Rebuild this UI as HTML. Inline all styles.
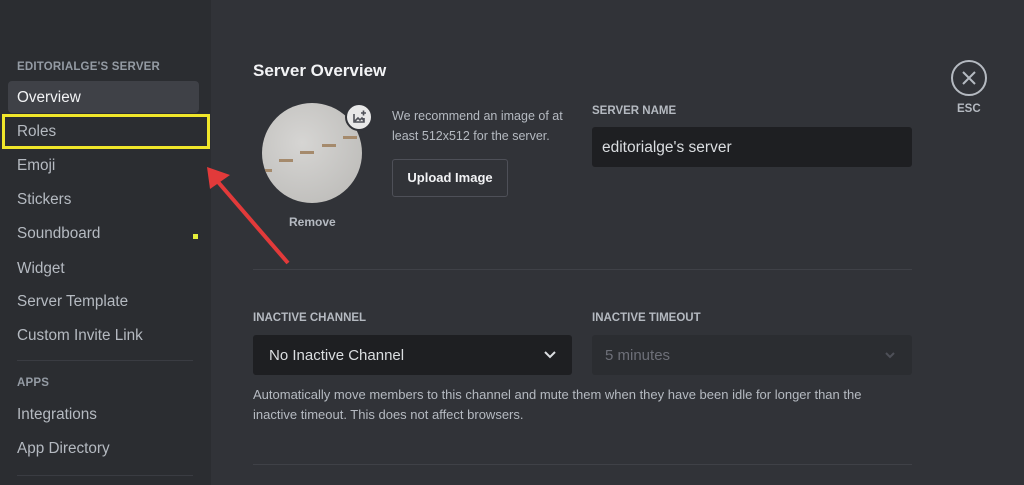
<!DOCTYPE html>
<html><head><style>
*{margin:0;padding:0;box-sizing:border-box}
body{width:1024px;height:485px;overflow:hidden;background:#313338;font-family:"Liberation Sans",sans-serif;position:relative}
.side{position:absolute;left:0;top:0;width:211px;height:485px;background:#2b2d31}
.a{position:absolute}
.hd{font-size:11.5px;font-weight:bold;color:#949ba4;letter-spacing:.2px}
.it{position:absolute;left:17px;font-size:15.3px;color:#b5bac1}
.lbl{font-size:11.5px;font-weight:bold;color:#b5bac1}
</style></head><body>
<div class="side">
<div class="a hd" style="left:17px;top:61px">EDITORIALGE'S SERVER</div>
<div class="a" style="left:8px;top:81px;width:191px;height:32px;background:#3f4147;border-radius:4px"></div>
<div class="it" style="top:89px;color:#f2f3f5">Overview</div>
<div class="a" style="left:2px;top:114px;width:208px;height:35px;border:3px solid #f0e62a"></div>
<div class="it" style="top:123px">Roles</div>
<div class="it" style="top:157px">Emoji</div>
<div class="it" style="top:191px">Stickers</div>
<div class="it" style="top:225px">Soundboard</div>
<div class="a" style="left:193px;top:234px;width:5px;height:5px;background:#e5ee3a"></div>
<div class="it" style="top:260px">Widget</div>
<div class="it" style="top:293px">Server Template</div>
<div class="it" style="top:327px">Custom Invite Link</div>
<div class="a" style="left:17px;top:360px;width:176px;height:1px;background:#3a3c42"></div>
<div class="a hd" style="left:17px;top:377px">APPS</div>
<div class="it" style="top:406px">Integrations</div>
<div class="it" style="top:440px">App Directory</div>
<div class="a" style="left:17px;top:475px;width:176px;height:1px;background:#3a3c42"></div>
</div>

<div class="a" style="left:253px;top:61px;font-size:17px;font-weight:bold;color:#f2f3f5">Server Overview</div>
<div class="a" style="left:262px;top:103px;width:100px;height:100px;border-radius:50%;background:radial-gradient(circle at 40% 40%,#d6d5d3,#b9b8b5);overflow:hidden">
<div class="a" style="left:-2px;top:66px;width:12px;height:3px;background:#a58a6c"></div>
<div class="a" style="left:17px;top:56px;width:14px;height:3px;background:#a58a6c"></div>
<div class="a" style="left:38px;top:48px;width:14px;height:3px;background:#a58a6c"></div>
<div class="a" style="left:60px;top:41px;width:14px;height:3px;background:#a58a6c"></div>
<div class="a" style="left:81px;top:33px;width:14px;height:3px;background:#a58a6c"></div>
</div>
<div class="a" style="left:345px;top:103px;width:28px;height:28px;border-radius:50%;background:#e8e8e8;border:2px solid #313338">
<svg width="24" height="24" viewBox="0 0 24 24" style="position:absolute;left:0;top:0"><path d="M7 9v8h10v-4M14 8h5M16.5 5.5v5M8 16l3-3 2 2 2-2 2 3" stroke="#4e5058" stroke-width="1.6" fill="none"/></svg>
</div>
<div class="a" style="left:289px;top:215px;font-size:12px;font-weight:bold;color:#b5bac1">Remove</div>
<div class="a" style="left:392px;top:106px;font-size:12.5px;line-height:20px;color:#b5bac1">We recommend an image of at<br>least 512x512 for the server.</div>
<div class="a" style="left:392px;top:159px;width:116px;height:38px;border:1px solid #4e5058;border-radius:3px;color:#f2f3f5;font-size:13px;font-weight:bold;text-align:center;line-height:36px">Upload Image</div>
<div class="a lbl" style="left:592px;top:105px">SERVER NAME</div>
<div class="a" style="left:592px;top:127px;width:320px;height:40px;background:#1e1f22;border-radius:3px;color:#dbdee1;font-size:15.5px;padding:12px 10px">editorialge's server</div>
<svg class="a" style="left:950px;top:59px" width="38" height="38"><circle cx="19" cy="19" r="17" stroke="#b5bac1" stroke-width="2" fill="none"/><path d="M13 13l12 12M25 13l-12 12" stroke="#b5bac1" stroke-width="2"/></svg>
<div class="a" style="left:957px;top:103px;font-size:11.5px;font-weight:bold;color:#b5bac1">ESC</div>
<div class="a" style="left:253px;top:269px;width:659px;height:1px;background:#3f4147"></div>
<div class="a lbl" style="left:253px;top:312px">INACTIVE CHANNEL</div>
<div class="a lbl" style="left:592px;top:312px">INACTIVE TIMEOUT</div>
<div class="a" style="left:253px;top:335px;width:319px;height:40px;background:#1e1f22;border-radius:3px;color:#dbdee1;font-size:15px;padding:12px 16px">No Inactive Channel</div>
<svg class="a" style="left:543px;top:348px" width="14" height="14"><path d="M2 4l5 5 5-5" stroke="#dbdee1" stroke-width="2" fill="none"/></svg>
<div class="a" style="left:592px;top:335px;width:320px;height:40px;background:#2b2d31;border-radius:3px;color:#6d6f78;font-size:15px;padding:12px 13px">5 minutes</div>
<svg class="a" style="left:883px;top:349px" width="14" height="14"><path d="M3 4l4 4 4-4" stroke="#4e5058" stroke-width="2" fill="none"/></svg>
<div class="a" style="left:253px;top:385px;font-size:13px;line-height:20px;color:#b5bac1;white-space:nowrap">Automatically move members to this channel and mute them when they have been idle for longer than the<br>inactive timeout. This does not affect browsers.</div>
<div class="a" style="left:253px;top:464px;width:659px;height:1px;background:#3f4147"></div>
<svg class="a" style="left:200px;top:155px" width="100" height="115"><path d="M88 108L12 20" stroke="#e23a3a" stroke-width="4"/><path d="M7 12l3 22 20-14z" fill="#e23a3a"/></svg>
</body></html>
